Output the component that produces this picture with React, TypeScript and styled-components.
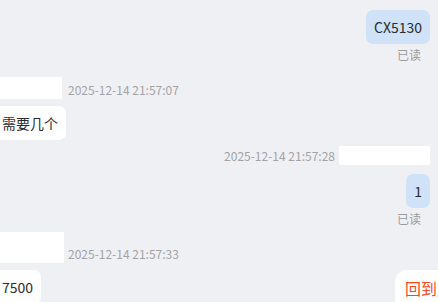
import React from 'react';
import styled, { createGlobalStyle } from 'styled-components';

type Msg = {
  id: number;
  side: 'left' | 'right';
  text: string;
  time?: string;
  nameWidth: number;
  nameHeight: number;
  nameGap: number;
  headerGap: number;
  bubbleGap: number;
  read?: boolean;
};

const messages: Msg[] = [
  { id: 1, side: 'right', text: 'CX5130', nameWidth: 0, nameHeight: 0, nameGap: 0, headerGap: 8, bubbleGap: 0, read: true },
  { id: 2, side: 'left', text: '需要几个', time: '2025-12-14 21:57:07', nameWidth: 68, nameHeight: 22, nameGap: 6, headerGap: 14, bubbleGap: 7 },
  { id: 3, side: 'right', text: '1', time: '2025-12-14 21:57:28', nameWidth: 91, nameHeight: 19, nameGap: 4, headerGap: 6, bubbleGap: 9, read: true },
  { id: 4, side: 'left', text: '7500', time: '2025-12-14 21:57:33', nameWidth: 70, nameHeight: 31, nameGap: 4, headerGap: 5, bubbleGap: 7 },
];

const GlobalStyle = createGlobalStyle`
  html, body {
    margin: 0;
    padding: 0;
    background: #eff0f4;
    overflow: hidden;
  }
  body {
    font-family: "Noto Sans CJK SC", "Noto Sans", sans-serif;
  }
`;

const App = () => {
  return (
    <>
      <GlobalStyle />
      <ChatList>
        <Status $offset={-14}>已读</Status>
        {messages.map((m) => (
          <MessageBlock key={m.id} $side={m.side} $gap={m.headerGap}>
            {m.time && (
              <Header $nameGap={m.nameGap} $gap={m.bubbleGap}>
                {m.side === 'left' && <NameMask $w={m.nameWidth} $h={m.nameHeight} />}
                <Time>{m.time}</Time>
                {m.side === 'right' && <NameMask $w={m.nameWidth} $h={m.nameHeight} />}
              </Header>
            )}
            <Bubble $side={m.side}>{m.text}</Bubble>
            {m.read && <Status $offset={3}>已读</Status>}
          </MessageBlock>
        ))}
      </ChatList>
      <BackButton>回到底部</BackButton>
    </>
  );
};

const ChatList = styled.div`
  display: flex;
  flex-direction: column;
  align-items: stretch;
  padding: 0 8px 0 0;
  margin-left: -6px;
`;

const MessageBlock = styled.div<{ $side: 'left' | 'right'; $gap: number }>`
  display: flex;
  flex-direction: column;
  align-items: ${({ $side }) => ($side === 'right' ? 'flex-end' : 'flex-start')};
  margin-top: ${({ $gap }) => $gap}px;
`;

const Header = styled.div<{ $nameGap: number; $gap: number }>`
  display: flex;
  align-items: flex-end;
  gap: ${({ $nameGap }) => $nameGap}px;
  margin-bottom: ${({ $gap }) => $gap}px;
`;

const NameMask = styled.div<{ $w: number; $h: number }>`
  width: ${({ $w }) => $w}px;
  height: ${({ $h }) => $h}px;
  background: #ffffff;
`;

const Time = styled.span`
  font-size: 12px;
  line-height: 16px;
  color: #a3a3a6;
  padding-bottom: 1px;
  white-space: nowrap;
`;

const Bubble = styled.div<{ $side: 'left' | 'right' }>`
  font-size: 14px;
  line-height: 20px;
  padding: 7px 8px;
  border-radius: 7px;
  color: #2b2b2b;
  background: ${({ $side }) => ($side === 'right' ? '#cfe2f8' : '#ffffff')};
  white-space: nowrap;
`;

const Status = styled.div<{ $offset: number }>`
  align-self: flex-end;
  margin-top: ${({ $offset }) => $offset}px;
  margin-right: 9px;
  font-size: 12px;
  line-height: 16px;
  color: #9b9b9e;
`;

const BackButton = styled.div`
  position: fixed;
  top: 270px;
  left: 395px;
  padding: 6px 10px;
  border-radius: 12px 0 0 12px;
  background: #ffffff;
  font-size: 16px;
  line-height: 24px;
  color: #f8471c;
  white-space: nowrap;
  height: 40px;
  box-sizing: border-box;
`;

export default App;
